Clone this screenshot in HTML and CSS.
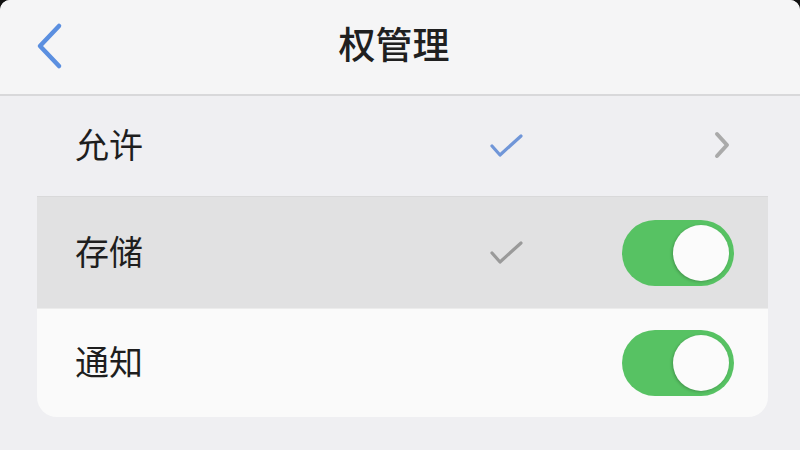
FILE: index.html
```html
<!DOCTYPE html>
<html lang="zh-CN">
<head>
<meta charset="utf-8">
<title>权管理</title>
<link rel="stylesheet" href="styles.css">
</head>
<body>
<div class="screen">
  <header class="navbar">
    <button class="back" aria-label="返回">
      <svg width="32" height="48" viewBox="0 0 32 48">
        <path d="M25 4 L6 24 L25 44" fill="none" stroke="#5b8fe0" stroke-width="4.5" stroke-linecap="round" stroke-linejoin="round"/>
      </svg>
    </button>
    <h1 class="title">权管理</h1>
  </header>

  <div class="list">
    <div class="row row-plain">
      <span class="label">允许</span>
      <span class="check">
        <svg width="40" height="30" viewBox="0 0 40 30">
          <path d="M4 14 L12 23 L33 4" fill="none" stroke="#7096d8" stroke-width="3.2" stroke-linecap="round" stroke-linejoin="round"/>
        </svg>
      </span>
      <span class="trail">
        <svg width="20" height="30" viewBox="0 0 20 30">
          <path d="M5 3 L15 14 L5 25" fill="none" stroke="#aaaaaa" stroke-width="4" stroke-linecap="round" stroke-linejoin="round"/>
        </svg>
      </span>
    </div>

    <div class="card">
      <div class="row row-active">
        <span class="label">存储</span>
        <span class="check">
          <svg width="40" height="30" viewBox="0 0 40 30">
            <path d="M4 14 L12 23 L33 4" fill="none" stroke="#9a9a9a" stroke-width="3.2" stroke-linecap="round" stroke-linejoin="round"/>
          </svg>
        </span>
        <span class="trail"><span class="toggle on"><span class="knob"></span></span></span>
      </div>
      <div class="row row-white">
        <span class="label">通知</span>
        <span class="check"></span>
        <span class="trail"><span class="toggle on"><span class="knob"></span></span></span>
      </div>
    </div>
  </div>
</div>
</body>
</html>
```
FILE: styles.css
```css
* { box-sizing: border-box; }

html, body {
  margin: 0;
  width: 800px;
  height: 450px;
  overflow: hidden;
  background: #111;
  font-family: "Noto Sans CJK SC", "Noto Sans", sans-serif;
}

.screen {
  width: 800px;
  height: 450px;
  background: #efeff2;
  border-radius: 10px 10px 0 0;
  overflow: hidden;
  display: flex;
  flex-direction: column;
}

.navbar {
  height: 96px;
  flex: none;
  background: #f5f5f6;
  border-bottom: 2px solid #d8d8da;
  display: grid;
  grid-template-columns: 100px 1fr 100px;
  align-items: center;
}

.back {
  border: 0;
  background: none;
  padding: 0 0 2px 34px;
  display: flex;
  align-items: center;
}

.title {
  margin: 0 12px 8px 0;
  text-align: center;
  font-size: 37px;
  font-weight: 500;
  color: #202020;
  letter-spacing: 0;
}

.list {
  display: flex;
  flex-direction: column;
}

.row {
  display: grid;
  grid-template-columns: 1fr 80px 148px;
  align-items: center;
  padding-left: 38px;
}

.row-plain {
  height: 100px;
  padding-left: 75px;
  margin-right: 32px;
}

.card {
  margin: 0 32px 0 37px;
  border-radius: 0 0 20px 20px;
  overflow: hidden;
}

.row-active {
  height: 112px;
  background: #e1e1e2;
  border-top: 1px solid #d9d9da;
}

.row-white {
  height: 109px;
  background: #fafafa;
  border-top: 1px solid #ececec;
}

.label {
  font-size: 34px;
  color: #1e1e1e;
  line-height: 1;
  padding-bottom: 4px;
}

.check {
  display: flex;
  align-items: center;
  justify-content: flex-start;
  padding-top: 2px;
  margin-left: -52px;
}

.trail {
  display: flex;
  align-items: center;
  justify-content: flex-end;
  padding-right: 34px;
}

.row-plain .trail { padding-right: 36px; }

.toggle {
  width: 112px;
  height: 66px;
  border-radius: 33px;
  background: #57c263;
  position: relative;
  display: block;
}

.toggle .knob {
  position: absolute;
  top: 5px;
  right: 5px;
  width: 56px;
  height: 56px;
  border-radius: 50%;
  background: #fbfbfb;
  box-shadow: -1px 1px 3px rgba(0, 0, 0, 0.22);
}
```
